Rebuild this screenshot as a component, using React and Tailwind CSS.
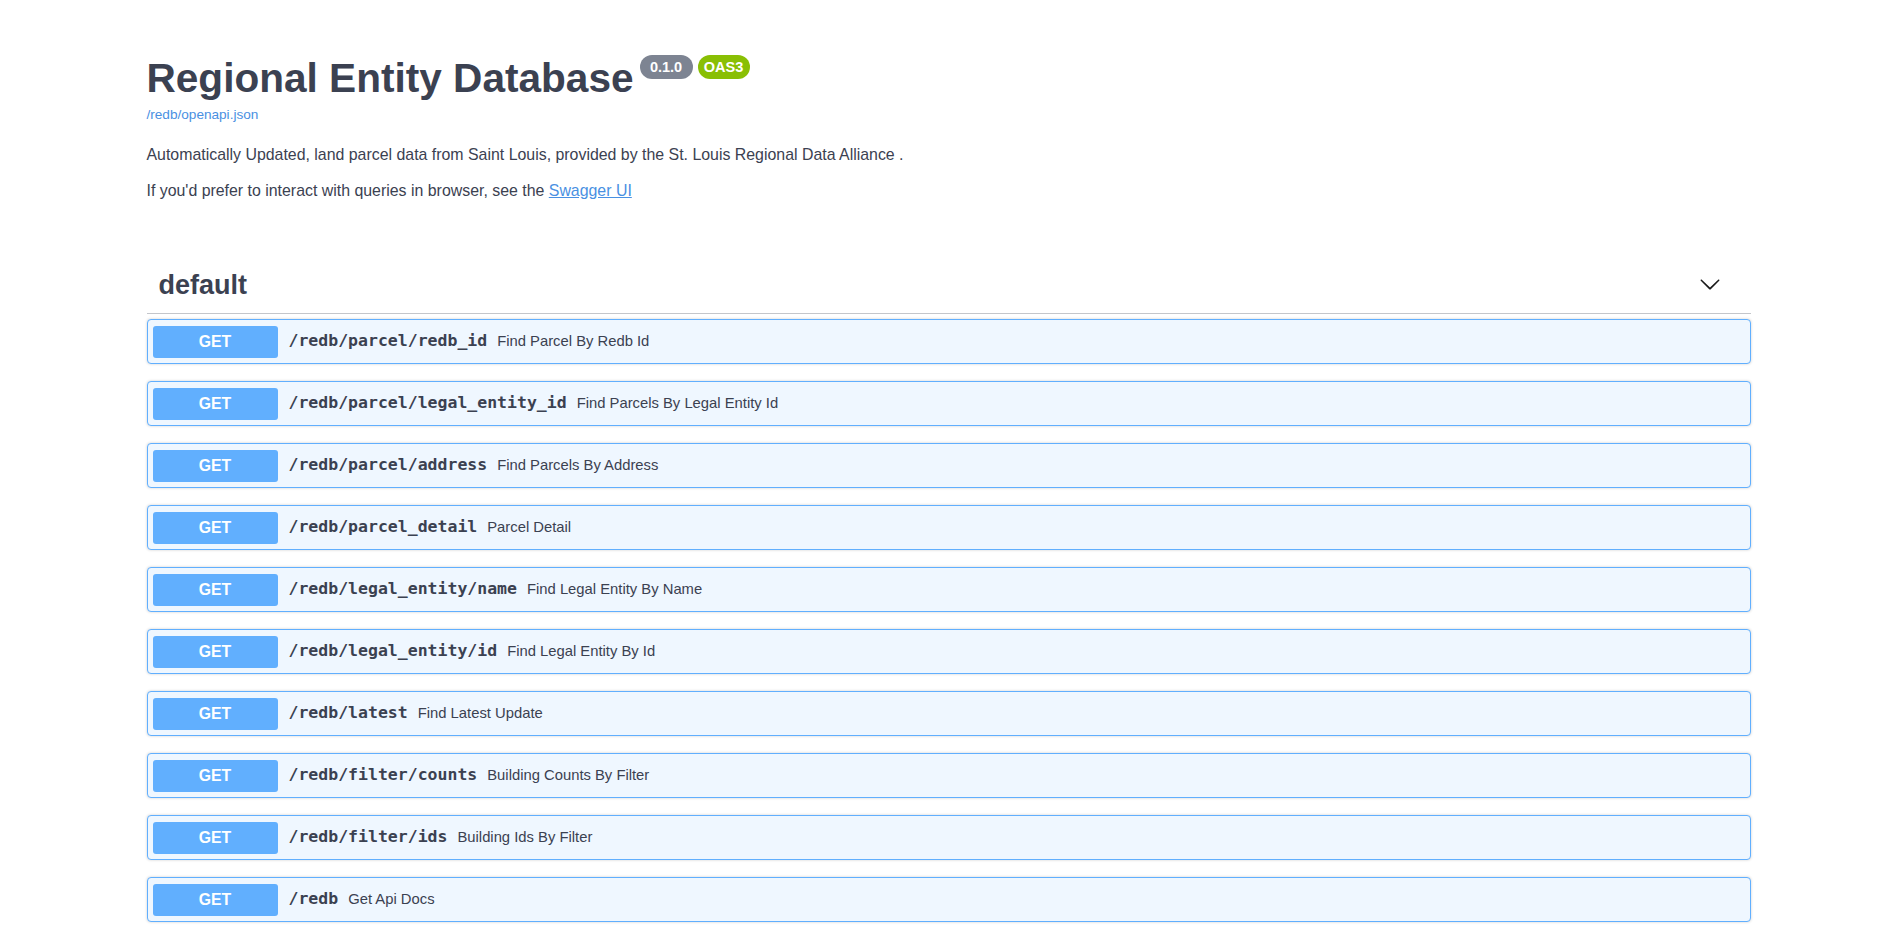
import React from "react";

const endpoints = [
  { path: "/redb/parcel/redb_id", summary: "Find Parcel By Redb Id" },
  { path: "/redb/parcel/legal_entity_id", summary: "Find Parcels By Legal Entity Id" },
  { path: "/redb/parcel/address", summary: "Find Parcels By Address" },
  { path: "/redb/parcel_detail", summary: "Parcel Detail" },
  { path: "/redb/legal_entity/name", summary: "Find Legal Entity By Name" },
  { path: "/redb/legal_entity/id", summary: "Find Legal Entity By Id" },
  { path: "/redb/latest", summary: "Find Latest Update" },
  { path: "/redb/filter/counts", summary: "Building Counts By Filter" },
  { path: "/redb/filter/ids", summary: "Building Ids By Filter" },
  { path: "/redb", summary: "Get Api Docs" },
];

function Opblock({ path, summary }) {
  return (
    <div className="h-[45px] flex items-center pl-[5px] border border-[#61affe] rounded-[4px] bg-[#eff7ff] shadow-[0_0_3px_rgba(0,0,0,0.19)]">
      <div className="w-[125px] h-[32px] flex items-center justify-center rounded-[3px] bg-[#61affe] text-white font-bold text-[15.8px]">
        GET
      </div>
      <span className="ml-[11px] font-['DejaVu_Sans_Mono',monospace] font-bold text-[16.5px] text-[#3b4151]">
        {path}
      </span>
      <span className="ml-[10px] text-[14.8px] text-[#3b4151]">{summary}</span>
    </div>
  );
}

export default function App() {
  return (
    <div className="min-h-screen bg-white font-['Liberation_Sans',Arial,sans-serif] text-[#3b4151]">
      <div className="w-[1604px] mx-auto pt-[55px] pb-[30px]">
        <div className="flex items-start">
          <h1 className="text-[40.6px] leading-[46px] font-bold text-[#3b4151]">
            Regional Entity Database
          </h1>
          <span className="ml-[6px] w-[53px] h-[24px] flex items-center justify-center rounded-full bg-[#7d8492] text-white font-bold text-[14.5px] leading-none">
            0.1.0
          </span>
          <span className="ml-[5px] w-[52px] h-[24px] flex items-center justify-center rounded-full bg-[#89bf04] text-white font-bold text-[14.5px] leading-none">
            OAS3
          </span>
        </div>
        <div className="mt-[6px] text-[13.6px] leading-[16px]">
          <a href="#" className="text-[#4990e2]">
            /redb/openapi.json
          </a>
        </div>
        <div className="mt-[21px] flex flex-col gap-[15px] text-[15.9px] leading-[21px]">
          <p>
            Automatically Updated, land parcel data from Saint Louis, provided by the St. Louis Regional Data Alliance .
          </p>
          <p>
            If you'd prefer to interact with queries in browser, see the{" "}
            <a href="#" className="text-[#4990e2] underline">
              Swagger UI
            </a>
          </p>
        </div>

        <div className="mt-[58px] pt-[10px] pb-[12px] pl-[12px] pr-[30px] flex items-center justify-between border-b border-[#c4c6cb]">
          <h3 className="text-[27px] leading-[32px] font-bold">default</h3>
          <svg width="22" height="22" viewBox="0 0 20 20" className="mb-[3px]">
            <path
              fill="#1a1a1a"
              d="M17.418 6.109c.272-.268.709-.268.979 0s.271.701 0 .969l-7.908 7.83c-.27.268-.707.268-.979 0l-7.908-7.830c-.27-.268-.27-.701 0-.969.271-.268.709-.268.979 0L10 13.25l7.418-7.141z"
            />
          </svg>
        </div>

        <div className="mt-[5px] flex flex-col gap-[17px]">
          {endpoints.map((e) => (
            <Opblock key={e.path} path={e.path} summary={e.summary} />
          ))}
        </div>
      </div>
    </div>
  );
}
